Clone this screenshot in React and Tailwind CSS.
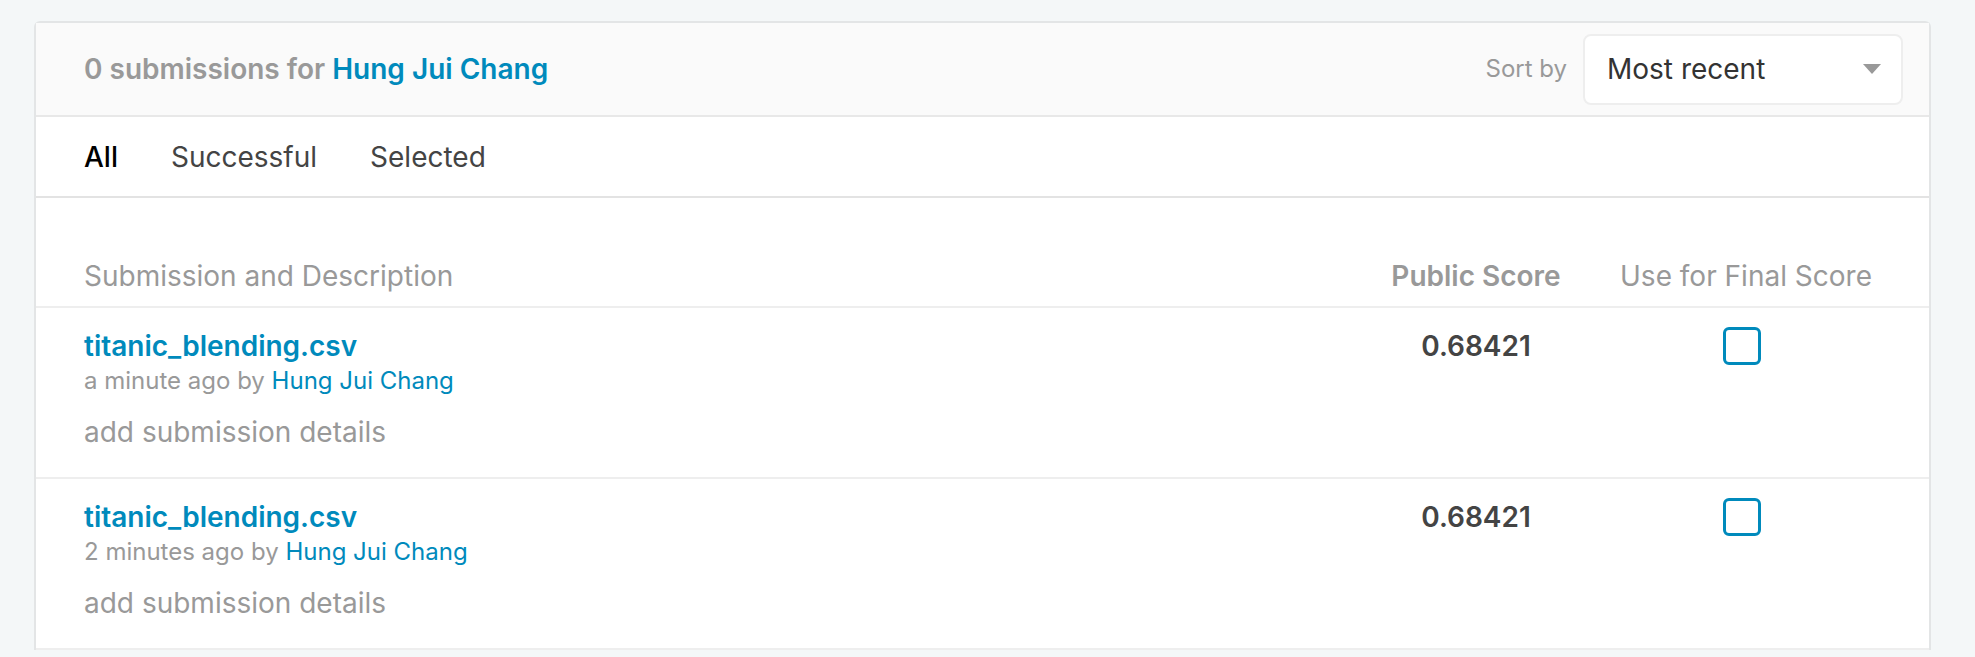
import React, { useState } from 'react';

const submissions = [
  { file: 'titanic_blending.csv', when: 'a minute ago', by: 'Hung Jui Chang', score: '0.68421' },
  { file: 'titanic_blending.csv', when: '2 minutes ago', by: 'Hung Jui Chang', score: '0.68421' },
];

const tabs = ['All', 'Successful', 'Selected'];

const SubmissionRow = ({ item, checked, onToggle }) => (
  <div className="grid grid-cols-[1fr_196px_280px] gap-[32px] border-b-2 border-[#eeeeee] pl-[48px] pr-[43px] h-[171px]">
    <div className="pt-[20px]">
      <a href="#" className="block text-[28px] leading-[36px] font-semibold text-[#008abc]">
        {item.file}
      </a>
      <div className="text-[24px] leading-[30px] text-[#999999] mt-[2px]">
        {item.when} by <a href="#" className="text-[#008abc]">{item.by}</a>
      </div>
      <div className="text-[28px] leading-[36px] text-[#999999] mt-[18px]">add submission details</div>
    </div>
    <div className="pt-[20px] text-center text-[28px] leading-[36px] font-semibold text-[#444444]">
      {item.score}
    </div>
    <div className="pt-[19px] flex justify-center">
      <button
        onClick={onToggle}
        className={`w-[38px] h-[38px] mr-[8px] rounded-[6px] border-[3px] border-[#008abc] ${checked ? 'bg-[#008abc]' : 'bg-white'}`}
        aria-label="Use for final score"
      />
    </div>
  </div>
);

const App = () => {
  const [activeTab, setActiveTab] = useState('All');
  const [selected, setSelected] = useState({});

  return (
    <div className="min-h-screen bg-[#f4f7f8] pt-[21px] pl-[34px] pr-[44px] font-['Inter',sans-serif]">
      <div className="bg-white border-2 border-[#e3e5e6] rounded-t-[6px] border-b-0">
        {/* Header */}
        <div className="h-[94px] bg-[#fafafa] border-b-2 border-[#e8e8e8] flex items-center justify-between pl-[48px] pr-[26px]">
          <div className="text-[28px] font-semibold text-[#999999]">
            0 submissions for <a href="#" className="text-[#008abc]">Hung Jui Chang</a>
          </div>
          <div className="flex items-center gap-[16px]">
            <span className="text-[24px] text-[#999999]">Sort by</span>
            <div className="w-[320px] h-[71px] bg-white border-2 border-[#eeeeee] rounded-[8px] flex items-center justify-between pl-[22px] pr-[20px]">
              <span className="text-[28px] text-[#333333]">Most recent</span>
              <svg width="18" height="10" viewBox="0 0 18 10">
                <path d="M0 0h18L9 10z" fill="#999999" />
              </svg>
            </div>
          </div>
        </div>

        {/* Tabs */}
        <div className="h-[81px] border-b-2 border-[#e3e3e3] flex items-center gap-[53px] pl-[48px]">
          {tabs.map((tab) => (
            <button
              key={tab}
              onClick={() => setActiveTab(tab)}
              className={`text-[28px] ${activeTab === tab ? 'text-black font-medium' : 'text-[#444444]'}`}
            >
              {tab}
            </button>
          ))}
        </div>

        {/* Column headings */}
        <div className="grid grid-cols-[1fr_196px_280px] gap-[32px] items-end h-[110px] pb-[12px] pl-[48px] pr-[43px] border-b-2 border-[#eeeeee]">
          <div className="text-[28px] leading-[36px] text-[#999999]">Submission and Description</div>
          <div className="text-[28px] leading-[36px] text-center font-semibold text-[#999999]">Public Score</div>
          <div className="text-[28px] leading-[36px] text-center text-[#999999]">Use for Final Score</div>
        </div>

        {submissions.map((item, i) => (
          <SubmissionRow
            key={i}
            item={item}
            checked={!!selected[i]}
            onToggle={() => setSelected({ ...selected, [i]: !selected[i] })}
          />
        ))}
      </div>
    </div>
  );
};

export default App;
